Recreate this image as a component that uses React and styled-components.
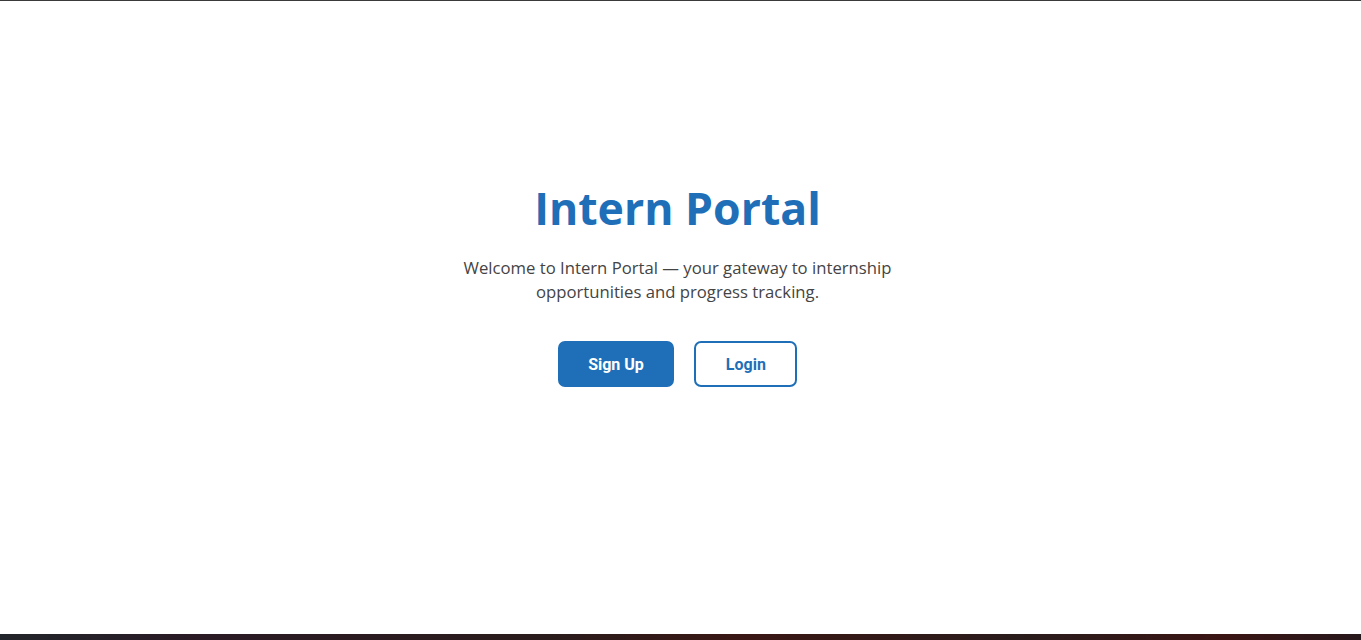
import React from "react";
import styled, { createGlobalStyle } from "styled-components";

const GlobalStyle = createGlobalStyle`
  html, body {
    margin: 0;
    padding: 0;
    background: #ffffff;
  }
  * {
    box-sizing: border-box;
  }
`;

const Page = styled.div`
  height: 640px;
  display: flex;
  flex-direction: column;
  border-top: 1px solid #3a3a3a;
  overflow: hidden;
`;

const Hero = styled.main`
  flex: 1;
  display: flex;
  flex-direction: column;
  align-items: center;
  padding: 175px 6px 0 0;
  text-align: center;
`;

const Title = styled.h1`
  margin: 0;
  font-family: "Open Sans", "Noto Sans", sans-serif;
  font-weight: 700;
  font-size: 44.6px;
  line-height: 64px;
  color: #1f6fb8;
`;

const Subtitle = styled.p`
  margin: 16px 0 0;
  max-width: 450px;
  font-family: "Open Sans", "Noto Sans", sans-serif;
  font-size: 16.7px;
  line-height: 24px;
  color: #444444;
`;

const Actions = styled.div`
  display: flex;
  gap: 20px;
  margin-top: 37px;
`;

const Button = styled.button`
  height: 46px;
  padding: 0 ${(p) => (p.$outline ? "29.5px" : "28.5px")};
  border-radius: 7px;
  border: 2px solid #1f6fb8;
  background: ${(p) => (p.$outline ? "#ffffff" : "#1f6fb8")};
  color: ${(p) => (p.$outline ? "#1f6fb8" : "#ffffff")};
  font-family: Roboto, "Liberation Sans", Arial, sans-serif;
  font-weight: 700;
  font-size: 16px;
  cursor: pointer;
`;

const Taskbar = styled.div`
  height: 6px;
  background: linear-gradient(90deg, #22252b 0%, #2a1a24 15%, #2a1c1c 40%, #3a1714 55%, #2a1c1c 75%, #3b1514 90%, #27181c 100%);
`;

export default function App() {
  return (
    <>
      <GlobalStyle />
      <Page>
        <Hero>
          <Title>Intern Portal</Title>
          <Subtitle>
            Welcome to Intern Portal — your gateway to internship opportunities
            and progress tracking.
          </Subtitle>
          <Actions>
            <Button>Sign Up</Button>
            <Button $outline>Login</Button>
          </Actions>
        </Hero>
        <Taskbar />
      </Page>
    </>
  );
}
